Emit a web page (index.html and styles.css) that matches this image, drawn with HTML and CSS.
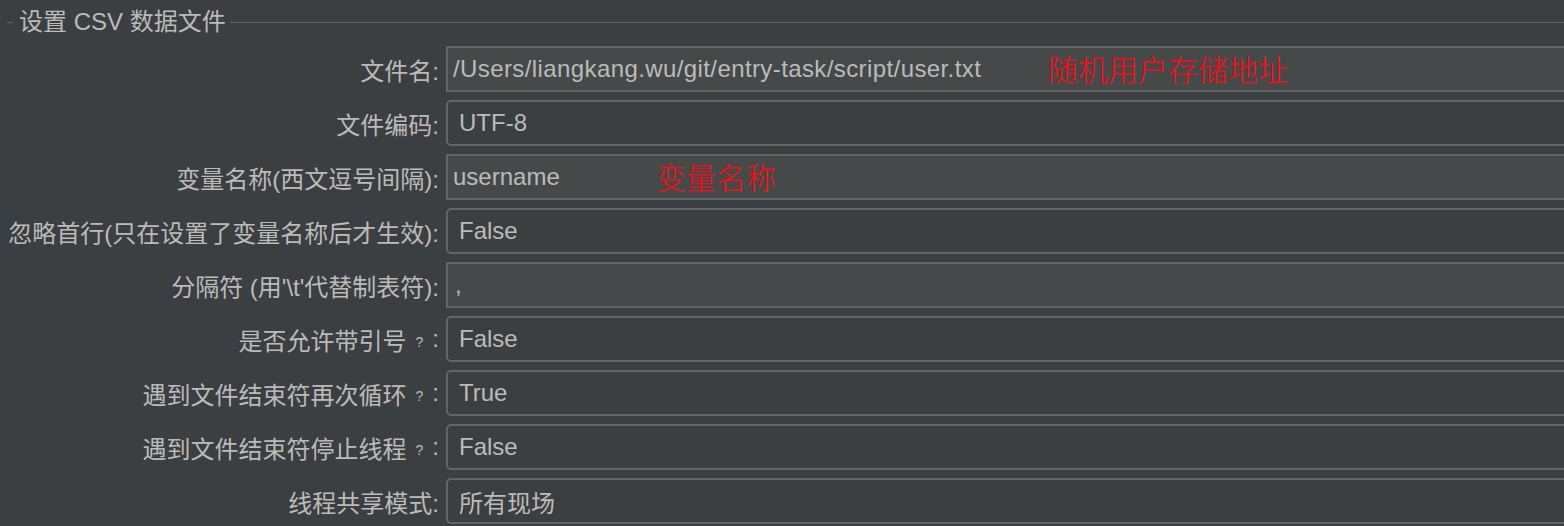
FILE: index.html
```html
<!DOCTYPE html>
<html lang="zh-CN">
<head>
<meta charset="utf-8">
<title>设置 CSV 数据文件</title>
<link rel="stylesheet" href="styles.css">
</head>
<body>
<div class="panel">
  <div class="titled">
    <span class="tline short"></span>
    <span class="ttext">设置 CSV 数据文件</span>
    <span class="tline long"></span>
  </div>
  <div class="form">
    <label class="lbl">文件名:</label>
    <div class="field text"><span class="val path">/Users/liangkang.wu/git/entry-task/script/user.txt</span><span class="note note1">随机用户存储地址</span></div>

    <label class="lbl">文件编码:</label>
    <div class="field combo"><span class="val">UTF-8</span></div>

    <label class="lbl">变量名称(西文逗号间隔):</label>
    <div class="field text"><span class="val">username</span><span class="note note2">变量名称</span></div>

    <label class="lbl">忽略首行(只在设置了变量名称后才生效):</label>
    <div class="field combo"><span class="val">False</span></div>

    <label class="lbl">分隔符 (用'\t'代替制表符):</label>
    <div class="field text"><span class="val comma">,</span></div>

    <label class="lbl">是否允许带引号<span class="q">?</span>:</label>
    <div class="field combo"><span class="val">False</span></div>

    <label class="lbl">遇到文件结束符再次循环<span class="q">?</span>:</label>
    <div class="field combo"><span class="val">True</span></div>

    <label class="lbl">遇到文件结束符停止线程<span class="q">?</span>:</label>
    <div class="field combo"><span class="val">False</span></div>

    <label class="lbl">线程共享模式:</label>
    <div class="field combo"><span class="val">所有现场</span></div>
  </div>
</div>
</body>
</html>
```

FILE: styles.css
```css
html, body {
  margin: 0;
  padding: 0;
  background: #3c3f41;
  overflow: hidden;
}
body {
  width: 1564px;
  height: 526px;
  font-family: "Liberation Sans", "Noto Sans CJK SC", sans-serif;
  font-size: 24px;
  color: #bbbbbb;
}
.panel {
  width: 1620px;
}
.titled {
  display: flex;
  align-items: center;
  height: 44px;
  margin-bottom: 2px;
}
.tline {
  height: 1px;
  background: #646464;
}
.tline.short {
  width: 6px;
  margin-left: 7px;
}
.ttext {
  margin-left: 6px;
  margin-right: 4px;
  white-space: nowrap;
  line-height: 1;
}
.tline.long {
  flex: 1;
}
.form {
  display: grid;
  grid-template-columns: 440px 1fr;
  column-gap: 6px;
  row-gap: 8px;
  grid-auto-rows: 46px;
}
.lbl {
  display: flex;
  align-items: center;
  justify-content: flex-end;
  white-space: nowrap;
  padding-right: 1px;
}
.q {
  font-size: 14px;
  margin: 0 9px 0 9px;
  position: relative;
  top: 3px;
}
.field {
  position: relative;
  display: flex;
  align-items: center;
  border: 2px solid #646464;
  box-sizing: border-box;
  white-space: nowrap;
}
.field.text {
  background: #45494a;
  padding-left: 5px;
}
.field.combo {
  background: #3c3f41;
  border-radius: 5px;
  padding-left: 11px;
}
.val.path {
  letter-spacing: 0.4px;
}
.val.comma {
  padding-left: 2px;
}
.note {
  position: absolute;
  top: 50%;
  transform: translateY(-52%);
  color: #ff0a14;
  font-family: "Noto Sans CJK SC", sans-serif;
  font-size: 30px;
  line-height: 1;
  font-weight: 300;
}
.note1 {
  left: 600px;
}
.note2 {
  left: 208px;
}
```
